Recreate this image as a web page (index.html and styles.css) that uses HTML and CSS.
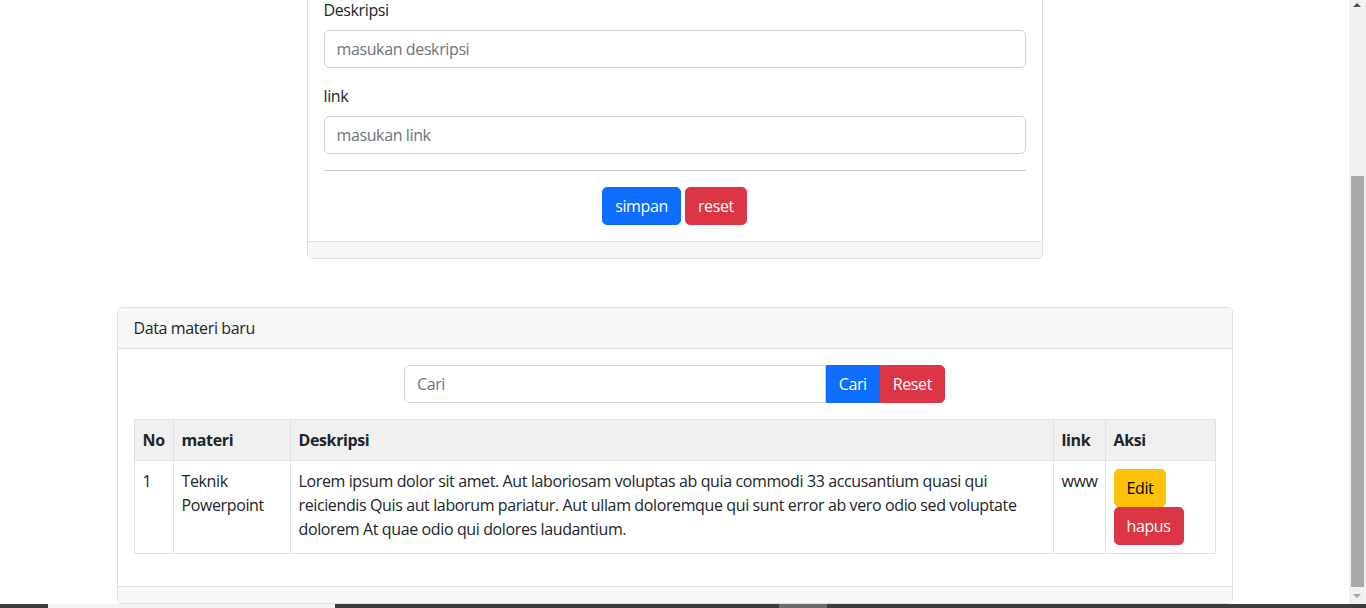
FILE: index.html
```html
<!DOCTYPE html>
<html lang="id">
<head>
<meta charset="utf-8">
<title>Data materi</title>
<link rel="stylesheet" href="styles.css">
</head>
<body>
<div class="screen">
  <div class="viewport">
    <main class="page">
      <div class="container">
        <div class="form-row">
          <div class="card form-card">
            <div class="card-body">
              <div class="field">
                <label class="form-label">Deskripsi</label>
                <input class="form-control" type="text" placeholder="masukan deskripsi">
              </div>
              <div class="field">
                <label class="form-label">link</label>
                <input class="form-control" type="text" placeholder="masukan link">
              </div>
              <hr class="divider">
              <div class="actions">
                <button class="btn btn-primary">simpan</button>
                <button class="btn btn-danger">reset</button>
              </div>
            </div>
            <div class="card-footer"></div>
          </div>
        </div>

        <div class="card data-card">
          <div class="card-header">Data materi baru</div>
          <div class="card-body">
            <form class="search">
              <input class="form-control search-input" type="text" placeholder="Cari">
              <button class="btn btn-primary btn-flat" type="button">Cari</button>
              <button class="btn btn-danger btn-end" type="button">Reset</button>
            </form>
            <table class="table">
              <thead>
                <tr>
                  <th class="c-no">No</th>
                  <th class="c-materi">materi</th>
                  <th class="c-desc">Deskripsi</th>
                  <th class="c-link">link</th>
                  <th class="c-aksi">Aksi</th>
                </tr>
              </thead>
              <tbody>
                <tr>
                  <td>1</td>
                  <td>Teknik Powerpoint</td>
                  <td>Lorem ipsum dolor sit amet. Aut laboriosam voluptas ab quia commodi 33 accusantium quasi qui reiciendis Quis aut laborum pariatur. Aut ullam doloremque qui sunt error ab vero odio sed voluptate dolorem At quae odio qui dolores laudantium.</td>
                  <td>www</td>
                  <td><button class="btn btn-warning">Edit</button> <button class="btn btn-danger">hapus</button></td>
                </tr>
              </tbody>
            </table>
          </div>
          <div class="card-footer"></div>
        </div>
      </div>
    </main>
    <div class="scrollbar">
      <div class="arrow arrow-up"></div>
      <div class="track"><div class="thumb"></div></div>
      <div class="arrow arrow-down"></div>
    </div>
  </div>
  <div class="taskbar">
    <div class="tb-dark tb-a"></div>
    <div class="tb-light"></div>
    <div class="tb-dark tb-b"></div>
    <div class="tb-gray"></div>
    <div class="tb-dark tb-c"></div>
  </div>
</div>
</body>
</html>
```

FILE: styles.css
```css
* { box-sizing: border-box; }

html, body {
  margin: 0;
  padding: 0;
  height: 608px;
  overflow: hidden;
  background: #fff;
}

body {
  font-family: "Segoe UI", "Open Sans", "Noto Sans", "Liberation Sans", sans-serif;
  font-size: 16px;
  line-height: 1.5;
  letter-spacing: -0.38px;
  color: #212529;
}

.screen {
  display: flex;
  flex-direction: column;
  height: 608px;
}

.viewport {
  display: flex;
  height: 604px;
  overflow: hidden;
}

.page {
  flex: 1;
  min-width: 0;
  overflow: hidden;
}

.container {
  max-width: 1140px;
  margin: -19px auto 0;
  padding: 0 12px;
}

.form-row {
  display: flex;
  justify-content: center;
}

.card {
  background: #fff;
  border: 1px solid #dfdfdf;
  border-radius: 5px;
  overflow: hidden;
}

.form-card {
  width: 736px;
}

.data-card {
  margin-top: 48px;
}

.card-body {
  padding: 16px;
}

.card-header {
  padding: 8px 16px;
  background: #f7f7f7;
  border-bottom: 1px solid #dfdfdf;
}

.card-footer {
  height: 17px;
  background: #f7f7f7;
  border-top: 1px solid #dfdfdf;
}

.field {
  margin-bottom: 16px;
}

.form-label {
  display: block;
  margin-bottom: 8px;
}

.form-control {
  display: block;
  width: 100%;
  height: 38px;
  padding: 6px 12px;
  font: inherit;
  letter-spacing: inherit;
  color: #212529;
  background: #fff;
  border: 1px solid #ced4da;
  border-radius: 5px;
  outline: none;
}

.form-control::placeholder {
  color: #6c757d;
}

.divider {
  margin: 16px 0;
  border: 0;
  border-top: 1px solid #c8c9ca;
}

.actions {
  display: flex;
  justify-content: center;
  gap: 4px;
}

.btn {
  display: inline-block;
  height: 38px;
  padding: 6px 12px;
  font: inherit;
  letter-spacing: inherit;
  line-height: 24px;
  border: 1px solid transparent;
  border-radius: 5px;
  cursor: pointer;
  vertical-align: top;
}

.btn-primary { background: #0d6efd; border-color: #0d6efd; color: #fff; }
.btn-danger { background: #dc3545; border-color: #dc3545; color: #fff; }
.btn-warning { background: #ffc107; border-color: #ffc107; color: #000; }

.search {
  display: flex;
  width: 50%;
  margin: 0 auto 16px;
}

.search-input {
  flex: 1;
  min-width: 0;
  border-radius: 5px 0 0 5px;
}

.btn-flat { border-radius: 0; }
.btn-end { border-radius: 0 5px 5px 0; }

.table {
  width: 100%;
  border-collapse: collapse;
  table-layout: fixed;
  vertical-align: top;
  margin-bottom: 16px;
}

.table th,
.table td {
  padding: 8px;
  border: 1px solid #dee2e6;
  text-align: left;
  vertical-align: top;
}

.table th {
  background: #f0f0f0;
  font-weight: 700;
}

.c-no { width: 39px; }
.c-materi { width: 117px; }
.c-link { width: 52px; }
.c-aksi { width: 110px; }

/* fake browser scrollbar */
.scrollbar {
  width: 17px;
  flex: none;
  background: #f1f1f1;
  display: flex;
  flex-direction: column;
}

.arrow {
  height: 17px;
  flex: none;
  position: relative;
}

.arrow::after {
  content: "";
  position: absolute;
  left: 4px;
  border-left: 4px solid transparent;
  border-right: 4px solid transparent;
}

.arrow-up::after {
  top: 3px;
  border-bottom: 4px solid #505050;
}

.arrow-down::after {
  bottom: 6px;
  border-top: 4px solid #a3a3a3;
}

.track {
  flex: 1;
  display: flex;
  flex-direction: column;
  justify-content: flex-end;
  padding: 0 2px;
}

.thumb {
  height: 411px;
  background: #a8a8a8;
}

/* taskbar edge */
.taskbar {
  height: 4px;
  display: flex;
}

.tb-dark { background: #3b3d42; }
.tb-a { width: 48px; }
.tb-light { width: 287px; background: #f2f2f2; }
.tb-b { width: 444px; }
.tb-gray { width: 48px; background: #6b6c70; }
.tb-c { flex: 1; }
```
